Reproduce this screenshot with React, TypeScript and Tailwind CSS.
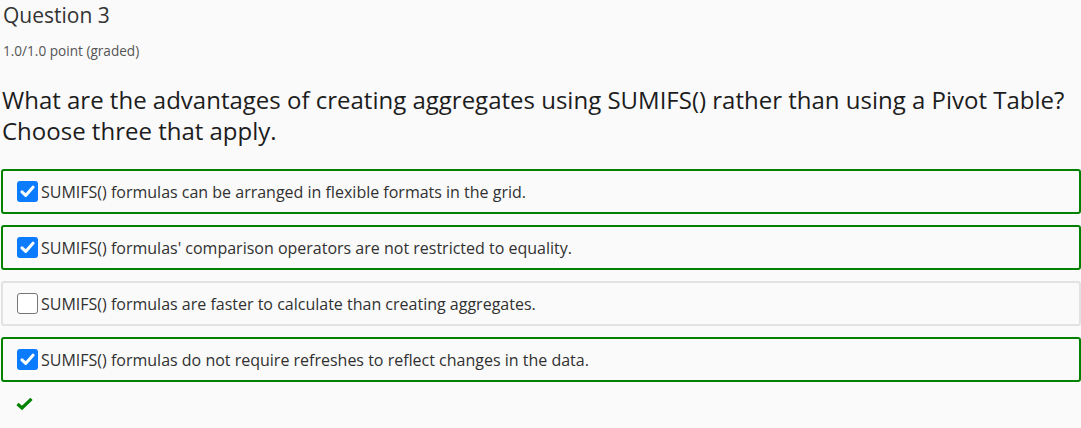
import React from "react";

const options = [
  { text: "SUMIFS() formulas can be arranged in flexible formats in the grid.", checked: true },
  { text: "SUMIFS() formulas' comparison operators are not restricted to equality.", checked: true },
  { text: "SUMIFS() formulas are faster to calculate than creating aggregates.", checked: false },
  { text: "SUMIFS() formulas do not require refreshes to reflect changes in the data.", checked: true },
];

function Box({ checked }: { checked: boolean }) {
  if (checked) {
    return (
      <span className="flex h-[21px] w-[21px] shrink-0 items-center justify-center rounded-[3px] bg-[#0b7bff]">
        <svg width="15" height="13" viewBox="0 0 15 13">
          <path d="M2 6.8 L5.7 10.4 L13 2.2" stroke="white" strokeWidth="3" fill="none" strokeLinecap="round" strokeLinejoin="round" />
        </svg>
      </span>
    );
  }
  return <span className="h-[21px] w-[21px] shrink-0 rounded-[3px] border border-[#767676] bg-white" />;
}

export default function App() {
  return (
    <div className="h-[428px] w-[1081px] overflow-hidden bg-[#fafafa] text-[#313131]" style={{ fontFamily: '"Open Sans", sans-serif' }}>
      <div className="pl-[3px] pt-[1px] text-[21px] leading-[29px] text-[#333]">Question 3</div>
      <div className="mt-[12px] pl-[3px] text-[13.6px] leading-[18px] text-[#555]">1.0/1.0 point (graded)</div>
      <div className="mt-[24px] pl-[2px] text-[24px] leading-[31px] text-[#1d1d1d]">
        What are the advantages of creating aggregates using SUMIFS() rather than using a Pivot Table? Choose three that apply.
      </div>
      <div className="mt-[23px] flex flex-col gap-[11px] pl-[1px]">
        {options.map((o, i) => (
          <div
            key={i}
            className={`flex h-[45px] w-[1080px] items-center gap-[3px] rounded-[3px] border-2 pl-[14px] text-[16px] ${o.checked ? "border-[#008100]" : "border-[#e2e2e2]"}`}
          >
            <Box checked={o.checked} />
            <span className="text-[#313131]">{o.text}</span>
          </div>
        ))}
      </div>
      <div className="mt-[15px] pl-[16px]">
        <svg width="17" height="13" viewBox="0 0 17 13">
          <path d="M1.5 7 L6 11 L15.5 1.8" stroke="#008100" strokeWidth="3.2" fill="none" />
        </svg>
      </div>
    </div>
  );
}
